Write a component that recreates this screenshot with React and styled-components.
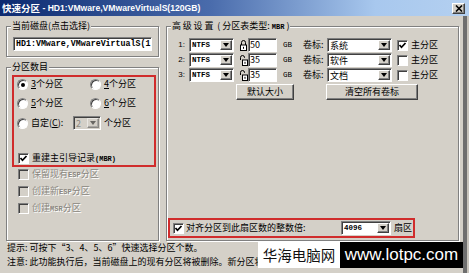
import React from 'react';
import styled, { createGlobalStyle } from 'styled-components';

const GlobalStyle = createGlobalStyle`
  html, body { margin: 0; padding: 0; background: #d4d0c8; }
  body { font-family: "Noto Sans CJK SC", "Liberation Sans", sans-serif; }
  * { box-sizing: border-box; }
`;

function App() {
  return (
    <Window>
      <GlobalStyle />
      <TitleBar>
        <TitleCjk>快速分区</TitleCjk>
        <TitleLatin>&nbsp;- HD1:VMware,VMwareVirtualS(120GB)</TitleLatin>
        <CloseButton>
          <svg width="8" height="7" viewBox="0 0 8 7">
            <path d="M1 0.5 L7 6.5 M7 0.5 L1 6.5" stroke="#000" strokeWidth="1.6" />
          </svg>
        </CloseButton>
      </TitleBar>

      <Body>
        <Main>
          <LeftColumn>
            <GroupBox $pad="5px 5px 5px 6px">
              <Legend $shift="-2px">当前磁盘(点击选择)</Legend>
              <DiskField>HD1:VMware,VMwareVirtualS(1</DiskField>
            </GroupBox>

            <GroupBox $pad="2px 2px 0 5px" $grow>
              <Legend $shift="-1px">分区数目</Legend>
              <RedFrame>
                <RadioGrid>
                  <Option><Radio $checked /><Label><U>3</U>个分区</Label></Option>
                  <Option><Radio /><Label><U>4</U>个分区</Label></Option>
                  <Option><Radio /><Label><U>5</U>个分区</Label></Option>
                  <Option><Radio /><Label><U>6</U>个分区</Label></Option>
                </RadioGrid>
                <CustomRow>
                  <Radio />
                  <Label $w="42px">自定(<U>C</U>):</Label>
                  <Select $w="28px" $disabled>
                    <SelectValue $dim>2</SelectValue>
                    <DropButton $dim><Arrow /></DropButton>
                  </Select>
                  <Label $ml="3px">个分区</Label>
                </CustomRow>
                <CheckRow $push>
                  <CheckBox $checked />
                  <Label>重建主引导记录<Small>(MBR)</Small></Label>
                </CheckRow>
              </RedFrame>
              <DisabledList>
                <CheckRow $indent><CheckBox $disabled /><Label $disabled>保留现有<Small>ESP</Small>分区</Label></CheckRow>
                <CheckRow $indent><CheckBox $disabled /><Label $disabled>创建新<Small>ESP</Small>分区</Label></CheckRow>
                <CheckRow $indent><CheckBox $disabled /><Label $disabled>创建<Small>MSR</Small>分区</Label></CheckRow>
              </DisabledList>
            </GroupBox>
          </LeftColumn>

          <GroupBox $pad="5px 1px 2px 1px" $w="293px">
            <Legend $shift="3px"><Spaced>高级设置</Spaced> ( 分区表类型: <Small>MBR</Small> )</Legend>
            {partitions.map((p) => (
              <PartRow key={p.n}>
                <RowNum>{p.n}:</RowNum>
                <Select $w="45px" $ml="2px">
                  <SelectValue $mono>NTFS</SelectValue>
                  <DropButton><Arrow /></DropButton>
                </Select>
                <LockIcon open={p.n !== 1} />
                <SizeInput>{p.size}</SizeInput>
                <Unit>GB</Unit>
                <Label $w="24px" $ml="0">卷标:</Label>
                <Select $w="65px">
                  <SelectValue>{p.label}</SelectValue>
                  <DropButton><Arrow /></DropButton>
                </Select>
                <CheckBox $checked={p.primary} $ml="5px" />
                <Label $ml="3px">主分区</Label>
              </PartRow>
            ))}
            <ButtonRow>
              <Button $w="58px">默认大小</Button>
              <Button $w="92px">清空所有卷标</Button>
            </ButtonRow>
            <AlignFrame>
              <CheckBox $checked />
              <Label $ml="2px">对齐分区到此扇区数的整数倍:</Label>
              <Select $w="50px" $ml="auto">
                <SelectValue $mono>4096</SelectValue>
                <DropButton><Arrow /></DropButton>
              </Select>
              <Label $ml="3px">扇区</Label>
            </AlignFrame>
          </GroupBox>
        </Main>

        <Hint>提示: 可按下“3、4、5、6”快速选择分区个数。</Hint>
        <Hint>注意: 此功能执行后，当前磁盘上的现有分区将被删除。新分区将</Hint>
      </Body>

      <Watermark>
        <MarkCn>华海电脑网</MarkCn>
        <MarkUrl>www.lotpc.com</MarkUrl>
      </Watermark>
    </Window>
  );
}

const partitions = [
  { n: 1, size: '50', label: '系统', primary: true },
  { n: 2, size: '35', label: '软件', primary: false },
  { n: 3, size: '35', label: '文档', primary: false },
];

function LockIcon({ open }) {
  return (
    <LockBox>
      <svg width="9" height="11" viewBox="0 0 9 11">
        {open ? (
          <path d="M1.5 5 V2.5 A2 2 0 0 1 5.5 2.5 V3" fill="none" stroke="#000" strokeWidth="1" />
        ) : (
          <path d="M2.5 5 V2.5 A2 2 0 0 1 6.5 2.5 V5" fill="none" stroke="#000" strokeWidth="1" />
        )}
        <rect x={open ? 3.5 : 1.5} y="5" width={open ? 5 : 6} height="5.5" fill="#fff" stroke="#000" strokeWidth="1" />
        <rect x={open ? 5.5 : 4} y="6.8" width="1" height="2" fill="#000" />
      </svg>
    </LockBox>
  );
}

export default App;

const Window = styled.div`
  position: relative;
  width: 469px;
  height: 273px;
  overflow: hidden;
  background: #d4d0c8;
  color: #000;
  font-size: 9px;
  line-height: 12px;
  display: flex;
  flex-direction: column;
  box-shadow: inset -2px 0 0 #c8c4bc, inset -6px 0 0 #6e6e6e;
`;

const TitleBar = styled.div`
  flex: none;
  height: 16px;
  display: flex;
  align-items: center;
  padding: 0 4px 0 2px;
  background: linear-gradient(to right, #0c2a70 0%, #4a6cac 45%, #a8c8ee 80%, #b4d0f0 100%);
  color: #fff;
  font-weight: bold;
  white-space: nowrap;
`;

const TitleCjk = styled.span`
  font-size: 9.5px;
`;

const TitleLatin = styled.span`
  font-family: "Liberation Sans", sans-serif;
  font-size: 8.6px;
`;

const CloseButton = styled.span`
  margin-left: auto;
  width: 13px;
  height: 11px;
  display: flex;
  align-items: center;
  justify-content: center;
  background: #d4d0c8;
  border: 1px solid;
  border-color: #fff #404040 #404040 #fff;
  box-shadow: inset -1px -1px 0 #808080;
`;

const Body = styled.div`
  flex: 1;
  display: flex;
  flex-direction: column;
  padding: 4px 6px 0 6px;
`;

const Main = styled.div`
  height: 221px;
  display: flex;
  gap: 7px;
`;

const LeftColumn = styled.div`
  width: 153px;
  display: flex;
  flex-direction: column;
  gap: 4px;
`;

const GroupBox = styled.fieldset`
  margin: 0;
  min-width: 0;
  width: ${(p) => p.$w || 'auto'};
  flex: ${(p) => (p.$grow ? 1 : 'none')};
  padding: ${(p) => p.$pad};
  border: 1px solid #808080;
  box-shadow: 1px 1px 0 #fff, inset 1px 1px 0 #fff;
  display: flex;
  flex-direction: column;
`;

const Legend = styled.legend`
  margin-left: ${(p) => p.$shift || '0'};
  padding: 0 1px;
  background: #d4d0c8;
  font-size: 9px;
  line-height: 12px;
  white-space: nowrap;
`;

const Spaced = styled.span`
  letter-spacing: 1.8px;
`;

const Small = styled.span`
  font-family: "Liberation Mono", monospace;
  font-size: 7px;
  font-weight: bold;
`;

const U = styled.span`
  text-decoration: underline;
`;

const Sunken = styled.div`
  border: 1px solid;
  border-color: #808080 #fff #fff #808080;
  box-shadow: inset 1px 1px 0 #404040;
`;

const DiskField = styled(Sunken)`
  width: 139px;
  height: 14px;
  background: #fff;
  padding-left: 2px;
  font-family: "Liberation Mono", monospace;
  font-weight: bold;
  font-size: 8.3px;
  line-height: 12px;
  white-space: nowrap;
  overflow: hidden;
`;

const RedFrame = styled.div`
  height: 92px;
  border: 2px solid #d02c2c;
  display: flex;
  flex-direction: column;
  padding: 0 0 0 3px;
`;

const RadioGrid = styled.div`
  display: grid;
  grid-template-columns: 73px 1fr;
  row-gap: 5px;
`;

const Option = styled.div`
  height: 14px;
  display: flex;
  align-items: center;
`;

const Radio = styled.span`
  flex: none;
  position: relative;
  width: 11px;
  height: 11px;
  border-radius: 50%;
  background: #fff;
  border: 1px solid;
  border-color: #808080 #fff #fff #808080;
  box-shadow: inset 1px 1px 0 #404040;

  &::after {
    content: '';
    display: ${(p) => (p.$checked ? 'block' : 'none')};
    position: absolute;
    left: 3px;
    top: 3px;
    width: 4px;
    height: 4px;
    border-radius: 50%;
    background: #000;
  }
`;

const Label = styled.span`
  flex: none;
  margin-left: ${(p) => p.$ml || '3px'};
  width: ${(p) => p.$w || 'auto'};
  white-space: nowrap;
  color: ${(p) => (p.$disabled ? '#8a8780' : '#000')};
  text-shadow: ${(p) => (p.$disabled ? '1px 1px 0 #fff' : 'none')};
`;

const CustomRow = styled.div`
  height: 14px;
  margin-top: 6px;
  display: flex;
  align-items: center;
`;

const CheckRow = styled.div`
  height: 14px;
  display: flex;
  align-items: center;
  margin-top: ${(p) => (p.$push ? 'auto' : '0')};
  margin-left: ${(p) => (p.$indent ? '6px' : '1px')};
`;

const CheckBox = styled.span`
  flex: none;
  width: 11px;
  height: 11px;
  margin-left: ${(p) => p.$ml || '0'};
  background: ${(p) => (p.$disabled ? '#d4d0c8' : '#fff')};
  border: 1px solid;
  border-color: #808080 #fff #fff #808080;
  box-shadow: inset 1px 1px 0 #404040;
  background-image: ${(p) =>
    p.$checked
      ? `url("data:image/svg+xml,%3Csvg xmlns='http://www.w3.org/2000/svg' width='9' height='9'%3E%3Cpath d='M1.5 4 L3.5 6.3 L7.5 2' fill='none' stroke='black' stroke-width='1.7'/%3E%3C/svg%3E")`
      : 'none'};
  background-repeat: no-repeat;
  background-position: center;
`;

const DisabledList = styled.div`
  display: flex;
  flex-direction: column;
  gap: 3px;
`;

const Select = styled(Sunken)`
  flex: none;
  display: flex;
  width: ${(p) => p.$w};
  height: 14px;
  margin-left: ${(p) => p.$ml || '0'};
  background: ${(p) => (p.$disabled ? '#d4d0c8' : '#fff')};
`;

const SelectValue = styled.span`
  flex: 1;
  padding: 1px 0 0 2px;
  line-height: 11px;
  white-space: nowrap;
  overflow: hidden;
  color: ${(p) => (p.$dim ? '#8a8780' : '#000')};
  font-family: ${(p) => (p.$mono ? '"Liberation Mono", monospace' : 'inherit')};
  font-weight: ${(p) => (p.$mono ? 'bold' : 'normal')};
  font-size: ${(p) => (p.$mono ? '7.5px' : '9px')};
`;

const DropButton = styled.span`
  flex: none;
  width: 12px;
  margin: 1px 1px 1px 0;
  display: flex;
  align-items: center;
  justify-content: center;
  background: #d4d0c8;
  border: 1px solid;
  border-color: #fff #404040 #404040 #fff;
  box-shadow: inset -1px -1px 0 #808080;
  opacity: ${(p) => (p.$dim ? 0.5 : 1)};
`;

const Arrow = styled.span`
  width: 0;
  height: 0;
  border-left: 3.5px solid transparent;
  border-right: 3.5px solid transparent;
  border-top: 4px solid #000;
`;

const PartRow = styled.div`
  height: 14px;
  margin-bottom: 1px;
  display: flex;
  align-items: center;
`;

const RowNum = styled.span`
  flex: none;
  width: 19px;
  padding-right: 2px;
  text-align: right;
  font-family: "Liberation Sans", sans-serif;
  font-size: 8px;
`;

const LockBox = styled.span`
  flex: none;
  width: 9px;
  height: 11px;
  margin-left: 5px;
  display: flex;
`;

const SizeInput = styled(Sunken)`
  flex: none;
  width: 29px;
  height: 14px;
  background: #fff;
  padding-left: 1px;
  line-height: 12px;
  font-size: 9px;
`;

const Unit = styled.span`
  flex: none;
  width: 26px;
  padding-left: 6px;
  font-family: "Liberation Mono", monospace;
  font-size: 7.5px;
`;

const ButtonRow = styled.div`
  display: flex;
  gap: 32px;
  margin: 1px 0 0 68px;
`;

const Button = styled.div`
  width: ${(p) => p.$w};
  height: 16px;
  display: flex;
  align-items: center;
  justify-content: center;
  background: #d4d0c8;
  border: 1px solid;
  border-color: #fff #404040 #404040 #fff;
  box-shadow: inset -1px -1px 0 #808080;
`;

const AlignFrame = styled.div`
  margin-top: auto;
  width: 247px;
  height: 20px;
  border: 2px solid #d02c2c;
  display: flex;
  align-items: center;
  padding: 0 1px 0 3px;
`;

const Hint = styled.div`
  height: 14px;
  line-height: 14px;
  padding-left: 1px;
  white-space: nowrap;
  &:first-of-type { margin-top: 3px; }
`;

const Watermark = styled.div`
  position: absolute;
  left: 258px;
  top: 242px;
  display: flex;
  height: 26px;
`;

const MarkCn = styled.span`
  width: 82px;
  display: flex;
  align-items: center;
  justify-content: center;
  background: #fff;
  color: #111;
  font-size: 14.5px;
`;

const MarkUrl = styled.span`
  width: 123px;
  display: flex;
  align-items: center;
  justify-content: center;
  background: #000;
  color: #fff;
  font-family: "Liberation Sans", sans-serif;
  font-size: 17px;
`;
